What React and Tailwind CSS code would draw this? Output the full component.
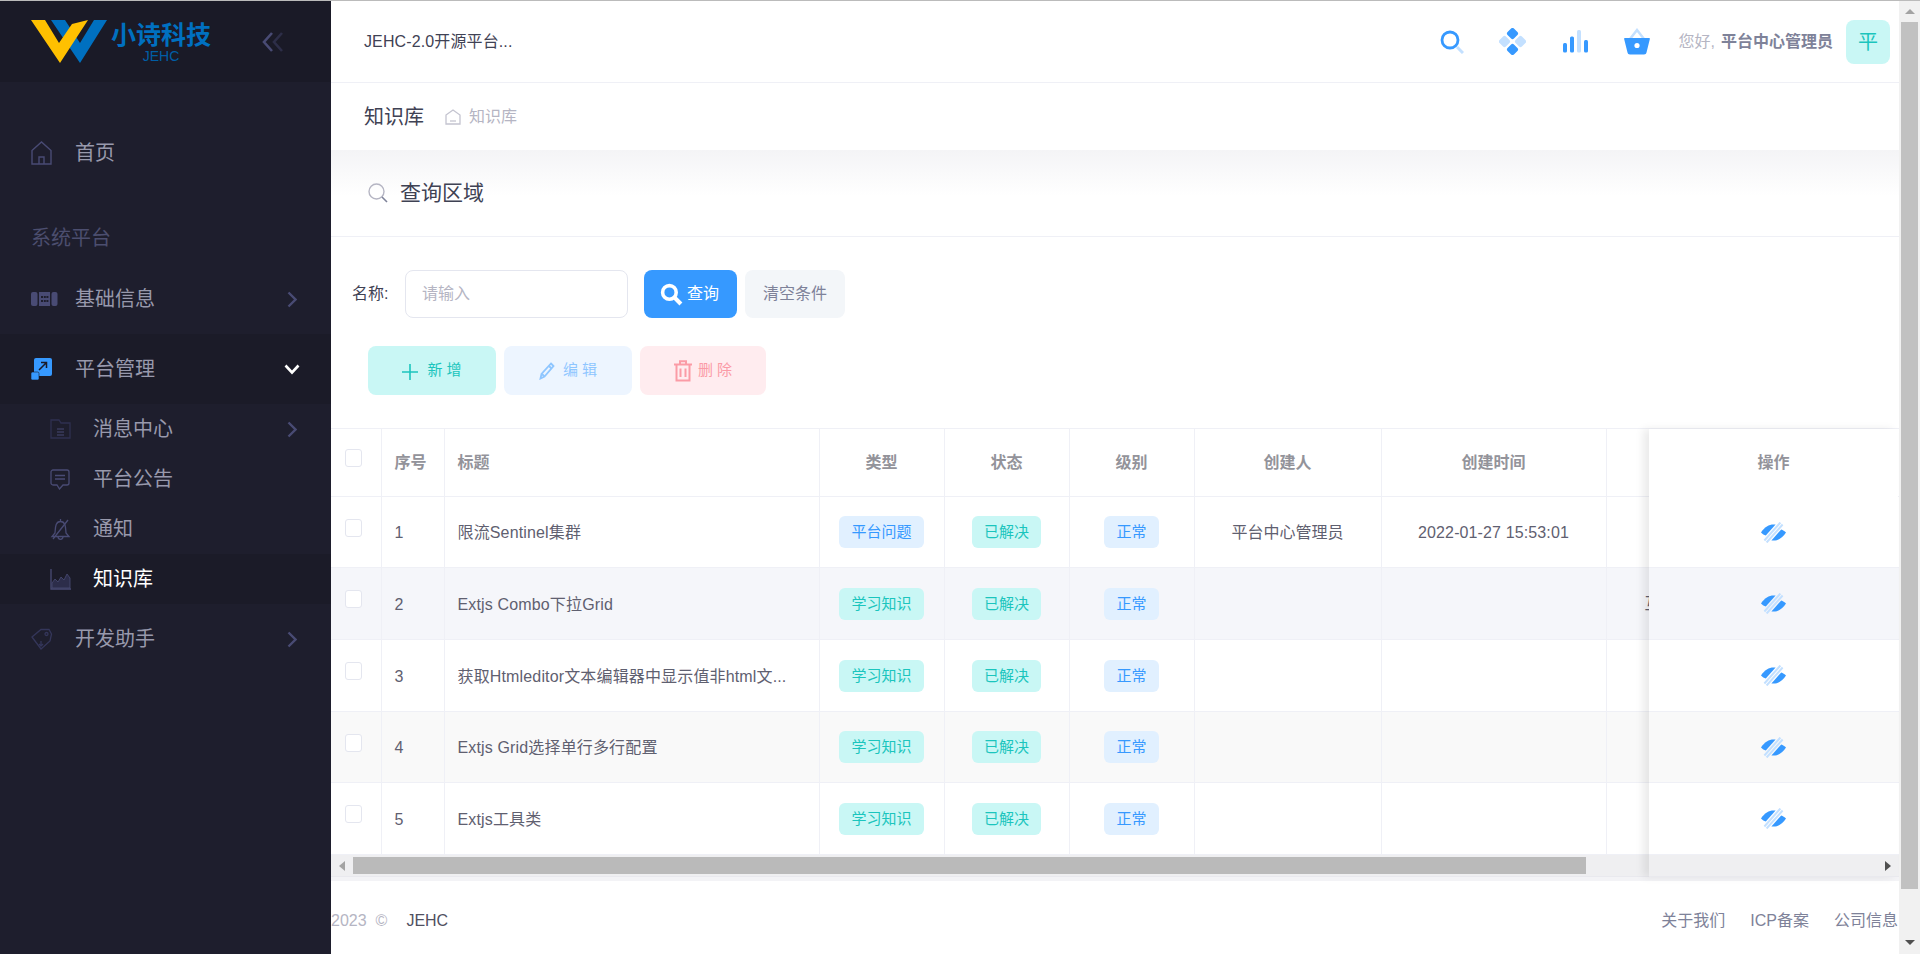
const FONT = "font-['Liberation_Sans','Noto_Sans_CJK_SC',sans-serif]";

function Chevron() {
  return (
    <svg width="10" height="17" viewBox="0 0 10 17" fill="none" stroke="#494b74" strokeWidth="2.4">
      <path d="M1.5 1.5L8.5 8.5L1.5 15.5" />
    </svg>
  );
}

function ChevronDown() {
  return (
    <svg width="16" height="11" viewBox="0 0 16 11" fill="none" stroke="#ffffff" strokeWidth="2.6" className="-mr-[3px]">
      <path d="M1.5 1.5L8 8.5L14.5 1.5" />
    </svg>
  );
}

function Logo() {
  return (
    <svg width="78" height="44" viewBox="0 0 78 44" className="shrink-0">
      <polygon points="20,0 34,0 49,23 63,0 76,0 49,43" fill="#0070c0" />
      <polygon points="0,0 14,0 28,23 41,4 57,0 29,43" fill="#ffc000" />
    </svg>
  );
}

function NavIcon({ name }) {
  if (name === "home") {
    return (
      <svg width="21" height="24" viewBox="0 0 21 24" fill="none" stroke="#494b74" strokeWidth="1.4">
        <path d="M1 9.5L10.5 1L20 9.5V23H1Z" />
        <path d="M8 23V16H13V23" />
      </svg>
    );
  }
  if (name === "base") {
    return (
      <svg width="27" height="14" viewBox="0 0 27 14" fill="#494b74">
        <rect x="0" y="0" width="6.5" height="14" rx="2" />
        <rect x="20.5" y="0" width="6" height="14" rx="2" />
        <path d="M8 0H19V14H8Z" />
        <g fill="#1e1e2d">
          <rect x="10" y="4" width="2" height="2" />
          <rect x="12.8" y="4" width="2" height="2" />
          <rect x="15.4" y="4" width="2" height="2" />
          <rect x="10" y="8" width="2" height="2" />
          <rect x="12.8" y="8" width="2" height="2" />
          <rect x="15.4" y="8" width="2" height="2" />
        </g>
      </svg>
    );
  }
  if (name === "platform") {
    return (
      <svg width="21" height="22" viewBox="0 0 21 22">
        <rect x="3" y="0" width="18" height="18" rx="2" fill="#3699ff" />
        <rect x="0" y="14" width="8" height="8" rx="1.5" fill="#3699ff" stroke="#1b1b28" strokeWidth="0.6" />
        <path d="M8 12L15 5M10 4.5H15.5V10" fill="none" stroke="#1b1b28" strokeWidth="1.5" />
      </svg>
    );
  }
  if (name === "folder") {
    return (
      <svg width="21" height="20" viewBox="0 0 21 20" fill="none" stroke="#2f3050" strokeWidth="1.3">
        <path d="M1 1H9L11 4H20V19H1Z" />
        <path d="M7 10H14M7 13H14M7 16H14" stroke="#3a3b5c" />
      </svg>
    );
  }
  if (name === "chat") {
    return (
      <svg width="20" height="21" viewBox="0 0 20 21" fill="none" stroke="#494b74" strokeWidth="1.3">
        <path d="M3 1H17C18 1 19 2 19 3V14C19 15 18 16 17 16H13L9.5 20L7 16H3C2 16 1 15 1 14V3C1 2 2 1 3 1Z" />
        <path d="M5 6.5H15M5 10H15" />
      </svg>
    );
  }
  if (name === "bell") {
    return (
      <svg width="21" height="22" viewBox="0 0 21 22" fill="none" stroke="#494b74" strokeWidth="1.3">
        <path d="M10.5 1V3M5 15C5.5 10 5 3.5 10.5 3.5C16 3.5 15.5 10 16 15L19 18.5H2Z" />
        <path d="M8 18.5C8 20.5 9 21.3 10.5 21.3C12 21.3 13 20.5 13 18.5M18 2L3 21" />
      </svg>
    );
  }
  if (name === "chart") {
    return (
      <svg width="21" height="21" viewBox="0 0 21 21" fill="none">
        <path d="M1 0V20H21" stroke="#494b74" strokeWidth="1.3" />
        <path d="M2 14L5 10L8 13L11 8L14 11L17 5L20 9V19H2Z" fill="#2c2d4a" stroke="#494b74" strokeWidth="0.8" />
      </svg>
    );
  }
  return (
    <svg width="22" height="22" viewBox="0 0 22 22" fill="none" stroke="#34365a" strokeWidth="1.3">
      <path d="M1 9L10 1.5H18L20.5 6L19 13L10 21Z" />
      <circle cx="15.5" cy="6" r="1.5" />
      <path d="M10 13V18M8 16L10 18L12 16" />
    </svg>
  );
}

function NavItem({ icon, label, right, className = "" }) {
  return (
    <div className={`flex h-[70px] items-center pl-[31px] pr-[34px] ${className}`}>
      <div className="flex w-[44px] shrink-0 items-center">
        <NavIcon name={icon} />
      </div>
      <span className="flex-1 text-[20px] text-[#9899ac]">{label}</span>
      {right}
    </div>
  );
}

function SubItem({ icon, label, right, active }) {
  return (
    <div className={`flex h-[50px] items-center pl-[50px] pr-[34px] ${active ? "bg-[#1b1b28]" : ""}`}>
      <div className="flex w-[43px] shrink-0 items-center">
        <NavIcon name={icon} />
      </div>
      <span className={`flex-1 text-[20px] ${active ? "text-white" : "text-[#9899ac]"}`}>{label}</span>
      {right}
    </div>
  );
}

function Sidebar() {
  return (
    <aside className="flex w-[331px] shrink-0 flex-col bg-[#1e1e2d]">
      <div className="flex h-[81px] items-start bg-[#1a1a27] pl-[31px] pt-[19px]">
        <Logo />
        <div className="ml-[3px] flex w-[98px] flex-col items-center">
          <span className="whitespace-nowrap text-[25px] font-bold leading-[30px] text-[#0070c0]">小诗科技</span>
          <span className="-mt-[2px] text-[14px] leading-[16px] text-[#005ea6]">JEHC</span>
        </div>
        <svg width="22" height="20" viewBox="0 0 22 20" fill="none" strokeWidth="2.6" className="ml-[52px] mt-[12px]">
          <path d="M10 1L2 10L10 19" stroke="#494b74" />
          <path d="M20 1L12 10L20 19" stroke="#2d2e48" />
        </svg>
      </div>
      <div className="pt-[36px]">
        <NavItem icon="home" label="首页" />
        <div className="flex h-[76px] items-center pb-[1px] pl-[31px] pt-[25px] text-[20px] text-[#4c4e6f]">系统平台</div>
        <NavItem icon="base" label="基础信息" right={<Chevron />} />
        <NavItem icon="platform" label="平台管理" right={<ChevronDown />} className="bg-[#1b1b28]" />
        <SubItem icon="folder" label="消息中心" right={<Chevron />} />
        <SubItem icon="chat" label="平台公告" />
        <SubItem icon="bell" label="通知" />
        <SubItem icon="chart" label="知识库" active />
        <NavItem icon="tag" label="开发助手" right={<Chevron />} />
      </div>
    </aside>
  );
}

function HeaderIcons() {
  return (
    <div className="flex items-center">
      <svg width="24" height="24" viewBox="0 0 24 24" fill="none" className="mr-[35px]">
        <circle cx="10" cy="10" r="8" stroke="#3699ff" strokeWidth="2.8" />
        <path d="M17 17L23 23" stroke="#c3e0ff" strokeWidth="3" />
      </svg>
      <svg width="27" height="27" viewBox="0 0 27 27" className="mr-[37px]">
        <rect x="9" y="1" width="9" height="9" rx="2" transform="rotate(45 13.5 5.5)" fill="#3699ff" />
        <rect x="9" y="17" width="9" height="9" rx="2" transform="rotate(45 13.5 21.5)" fill="#3699ff" />
        <rect x="1" y="9" width="9" height="9" rx="2" transform="rotate(45 5.5 13.5)" fill="#c3e0ff" />
        <rect x="17" y="9" width="9" height="9" rx="2" transform="rotate(45 21.5 13.5)" fill="#c3e0ff" />
      </svg>
      <svg width="26" height="23" viewBox="0 0 26 23" className="mr-[35px]">
        <rect x="0" y="13" width="4" height="9.5" rx="1.5" fill="#3699ff" />
        <rect x="7" y="6.5" width="4" height="16" rx="1.5" fill="#3699ff" />
        <rect x="14" y="0" width="4" height="22.5" rx="1.5" fill="#c3e0ff" />
        <rect x="21" y="10" width="4" height="12.5" rx="1.5" fill="#3699ff" />
      </svg>
      <svg width="26" height="27" viewBox="0 0 26 27" className="mr-[29px]">
        <path d="M6 11L13 2L20 11" fill="none" stroke="#c3e0ff" strokeWidth="2.5" />
        <path d="M1 10H25C25.8 10 26 10.6 25.8 11.3L22.5 24.5C22.2 25.6 21.5 26.5 20 26.5H6C4.5 26.5 3.8 25.6 3.5 24.5L0.2 11.3C0 10.6 0.2 10 1 10Z" fill="#3699ff" />
        <circle cx="13" cy="17.5" r="2.6" fill="#ffffff" />
      </svg>
      <span className="text-[16px] text-[#b5b5c3]">您好,</span>
      <span className="ml-[6px] text-[16px] font-bold text-[#7e8299]">平台中心管理员</span>
      <div className="ml-[13px] flex h-[44px] w-[44px] items-center justify-center rounded-[8px] bg-[#c9f7f5] text-[20px] text-[#1bc5bd]">平</div>
    </div>
  );
}

function SearchBar() {
  return (
    <div className="flex h-[48px] items-center pl-[21px]">
      <span className="w-[53px] text-[16px] text-[#3f4254]">名称:</span>
      <input
        readOnly
        placeholder="请输入"
        className="h-[48px] w-[223px] rounded-[8px] border border-[#e4e6ef] bg-white px-[16px] text-[16px] outline-none placeholder:text-[#b5b5c3]"
      />
      <button className="ml-[16px] flex h-[48px] w-[93px] items-center rounded-[8px] bg-[#3699ff] pl-[16px] text-[16px] text-white">
        <svg width="23" height="23" viewBox="0 0 22 22" fill="none" stroke="#fff" className="mr-[4px]">
          <circle cx="9" cy="9" r="6.5" strokeWidth="3.4" />
          <path d="M13.5 13.5L20 20" strokeWidth="4" />
        </svg>
        查询
      </button>
      <button className="ml-[8px] h-[48px] w-[100px] rounded-[8px] bg-[#f3f6f9] text-[16px] text-[#7e8299]">清空条件</button>
    </div>
  );
}

function ActionBar() {
  return (
    <div className="mt-[28px] flex h-[49px] gap-[8px] pl-[37px]">
      <button className="flex w-[128px] items-center justify-center rounded-[8px] bg-[#c9f7f5] text-[15px] text-[#1bc5bd]">
        <svg width="16" height="16" viewBox="0 0 16 16" stroke="#1bc5bd" strokeWidth="1.6" className="mr-[9px] mt-[3px]">
          <path d="M8 0V16M0 8H16" />
        </svg>
        新 增
      </button>
      <button className="flex w-[128px] items-center justify-center rounded-[8px] bg-[#edf5ff] text-[15px] text-[#8fc6ff]">
        <svg width="16" height="18" viewBox="0 0 16 18" fill="none" stroke="#8fc6ff" strokeWidth="1.8" className="mr-[8px]">
          <path d="M12 1.5L14.5 4L5.5 14.5L1.5 16.5L2.5 12Z" />
          <path d="M10 4L12.5 6.5M3 12L5.5 14.5" />
        </svg>
        编 辑
      </button>
      <button className="flex w-[126px] items-center justify-center rounded-[8px] bg-[#ffecef] text-[15px] text-[#fb9ba6]">
        <svg width="18" height="22" viewBox="0 0 18 22" fill="none" stroke="#fb9ba6" strokeWidth="2" className="mr-[6px]">
          <path d="M0 4.5H18M6 4V1.2H12V4M2.5 5V20.5H15.5V5M6.5 8.5V17M11.5 8.5V17" />
        </svg>
        删 除
      </button>
    </div>
  );
}

function Tag({ color, children }) {
  const cls = color === "blue" ? "bg-[#e1f0ff] text-[#3699ff]" : "bg-[#c9f7f5] text-[#1bc5bd]";
  return <span className={`inline-block rounded-[6px] px-[12px] py-[5px] text-[15px] leading-[22px] ${cls}`}>{children}</span>;
}

function Checkbox() {
  return <div className="h-[18px] w-[17px] rounded-[3px] border border-[#e4e6ef] bg-white" />;
}

function EyeOff() {
  return (
    <svg width="25" height="21" viewBox="0 0 25 21">
      <path d="M0 10.5C3.5 5 8 2.5 12.5 2.5L14.6 2.6L4.8 13.6C3 13 1.5 12 0 10.5Z" fill="#3699ff" />
      <path d="M25 10.5C21.5 16 17 18.5 12.5 18.5L10.4 18.4L20.2 7.4C22 8 23.5 9 25 10.5Z" fill="#3699ff" />
      <path d="M3.4 18.5L19.4 0.5M5.6 20.5L21.6 2.5" stroke="#c3e0ff" strokeWidth="2" />
    </svg>
  );
}

const ROWS = [
  { no: 1, title: "限流Sentinel集群", type: "平台问题", typeColor: "blue", user: "平台中心管理员", time: "2022-01-27 15:53:01", h: "h-[71px]", bg: "bg-white" },
  { no: 2, title: "Extjs Combo下拉Grid", type: "学习知识", typeColor: "teal", extra: "互联网", h: "h-[72px]", bg: "bg-[#f5f6fa]" },
  { no: 3, title: "获取Htmleditor文本编辑器中显示值非html文...", type: "学习知识", typeColor: "teal", h: "h-[72px]", bg: "bg-white" },
  { no: 4, title: "Extjs Grid选择单行多行配置", type: "学习知识", typeColor: "teal", h: "h-[71px]", bg: "bg-[#f9f9f9]" },
  { no: 5, title: "Extjs工具类", type: "学习知识", typeColor: "teal", h: "h-[72px]", bg: "bg-white" },
];

const TH = "border-r border-b border-[#eff0f6] text-[16px] font-semibold text-[#93939a]";
const TD = "border-r border-b border-[#eff0f6] text-[16px] text-[#5f6070]";

function DataTable() {
  return (
    <div className="relative">
      <div className="overflow-hidden">
        <table className="w-[1700px] table-fixed border-collapse border-t border-[#eff0f6]">
          <colgroup>
            <col className="w-[50px]" />
            <col className="w-[63px]" />
            <col className="w-[375px]" />
            <col className="w-[125px]" />
            <col className="w-[125px]" />
            <col className="w-[125px]" />
            <col className="w-[187px]" />
            <col className="w-[225px]" />
            <col />
          </colgroup>
          <thead>
            <tr className="h-[68px]">
              <th className={TH}>
                <div className="-mt-[9px] pl-[14px]"><Checkbox /></div>
              </th>
              <th className={`${TH} pl-[13px] text-left`}>序号</th>
              <th className={`${TH} pl-[13px] text-left`}>标题</th>
              <th className={TH}>类型</th>
              <th className={TH}>状态</th>
              <th className={TH}>级别</th>
              <th className={TH}>创建人</th>
              <th className={TH}>创建时间</th>
              <th className={TH} />
            </tr>
          </thead>
          <tbody>
            {ROWS.map((r) => (
              <tr key={r.no} className={`${r.h} ${r.bg}`}>
                <td className={TD}>
                  <div className="-mt-[9px] pl-[14px]"><Checkbox /></div>
                </td>
                <td className={`${TD} pl-[13px] pt-[2px]`}>{r.no}</td>
                <td className={`${TD} pl-[13px] pt-[2px] tracking-[0.15px]`}>{r.title}</td>
                <td className={`${TD} text-center`}><Tag color={r.typeColor}>{r.type}</Tag></td>
                <td className={`${TD} text-center`}><Tag color="teal">已解决</Tag></td>
                <td className={`${TD} text-center`}><Tag color="blue">正常</Tag></td>
                <td className={`${TD} pt-[2px] text-center`}>{r.user}</td>
                <td className={`${TD} pt-[2px] text-center tracking-[0.12px]`}>{r.time}</td>
                <td className={`${TD} pl-[38px]`}>{r.extra}</td>
              </tr>
            ))}
          </tbody>
        </table>
      </div>
      <div className="flex h-[22px] items-center border-b border-[#e9e9ee] bg-[#efeff1]">
        <div className="flex w-[22px] justify-center">
          <div className="h-0 w-0 border-y-[5px] border-r-[6px] border-y-transparent border-r-[#a3a3a3]" />
        </div>
        <div className="h-[17px] w-[1233px] bg-[#bababa]" />
        <div className="flex-1" />
        <div className="flex w-[22px] justify-center">
          <div className="h-0 w-0 border-y-[5px] border-l-[6px] border-y-transparent border-l-[#505050]" />
        </div>
      </div>
      <div className="absolute bottom-0 right-px top-px flex w-[249px] flex-col overflow-hidden shadow-[-6px_0_8px_rgba(0,0,0,0.08)]">
        <div className="flex h-[68px] shrink-0 items-center justify-center bg-white text-[16px] font-semibold text-[#93939a]">操作</div>
        {ROWS.map((r) => (
          <div key={r.no} className={`flex shrink-0 items-center justify-center border-b border-[#eff0f6] ${r.h} ${r.bg}`}>
            <EyeOff />
          </div>
        ))}
      </div>
    </div>
  );
}

function PageScrollbar() {
  return (
    <div className="flex w-[21px] shrink-0 flex-col bg-[#f1f1f1] px-[2px]">
      <div className="flex h-[21px] items-center justify-center">
        <div className="h-0 w-0 border-x-[5px] border-b-[5px] border-x-transparent border-b-[#a3a3a3]" />
      </div>
      <div className="h-[867px] bg-[#c1c1c1]" />
      <div className="flex flex-1 items-end justify-center pb-[9px]">
        <div className="h-0 w-0 border-x-[5px] border-t-[5px] border-x-transparent border-t-[#505050]" />
      </div>
    </div>
  );
}

export default function App() {
  return (
    <div className={`flex h-[954px] flex-col overflow-hidden bg-white ${FONT}`}>
      <div className="h-px shrink-0 bg-[#bbbbbb]" />
      <div className="flex min-h-0 flex-1">
        <Sidebar />
        <main className="flex min-w-0 flex-1 flex-col">
          <header className="flex h-[82px] shrink-0 items-center justify-between border-b border-[#eff0f6] pl-[33px] pr-[9px]">
            <span className="text-[16px] tracking-[0.12px] text-[#3f4254]">JEHC-2.0开源平台...</span>
            <HeaderIcons />
          </header>
          <div className="flex h-[67px] shrink-0 items-center pl-[33px]">
            <span className="text-[20px] text-[#3f4254]">知识库</span>
            <svg width="16" height="16" viewBox="0 0 16 16" fill="none" stroke="#c4c4d0" strokeWidth="1.3" className="ml-[21px]">
              <path d="M1 6L8 1L15 6V15H1Z" />
              <path d="M5 12H11" />
            </svg>
            <span className="ml-[8px] text-[16px] text-[#b5b5c3]">知识库</span>
          </div>
          <div className="flex h-[87px] shrink-0 items-center border-b border-[#eff0f6] bg-[linear-gradient(#f4f4f6,#ffffff_46px)] pl-[37px]">
            <svg width="20" height="20" viewBox="0 0 20 20" fill="none" className="mr-[12px]">
              <circle cx="8.5" cy="8.5" r="7.5" stroke="#b5b5c3" strokeWidth="1.4" />
              <path d="M14 14L19 19" stroke="#7e8299" strokeWidth="1.6" />
            </svg>
            <span className="text-[21px] text-[#3f4254]">查询区域</span>
          </div>
          <div className="shrink-0 py-[33px]">
            <SearchBar />
            <ActionBar />
          </div>
          <DataTable />
          <div className="h-[4px] shrink-0 bg-[#f3f3f6]" />
          <footer className="flex flex-1 items-center justify-between pr-px pt-[6px] text-[16px]">
            <div className="flex">
              <span className="text-[#b5b5c3]">2023</span>
              <span className="ml-[9px] text-[#b5b5c3]">©</span>
              <span className="ml-[19px] text-[#50505f]">JEHC</span>
            </div>
            <div className="flex gap-[25px] text-[#7e8299]">
              <span>关于我们</span>
              <span>ICP备案</span>
              <span>公司信息</span>
            </div>
          </footer>
        </main>
        <PageScrollbar />
      </div>
    </div>
  );
}
